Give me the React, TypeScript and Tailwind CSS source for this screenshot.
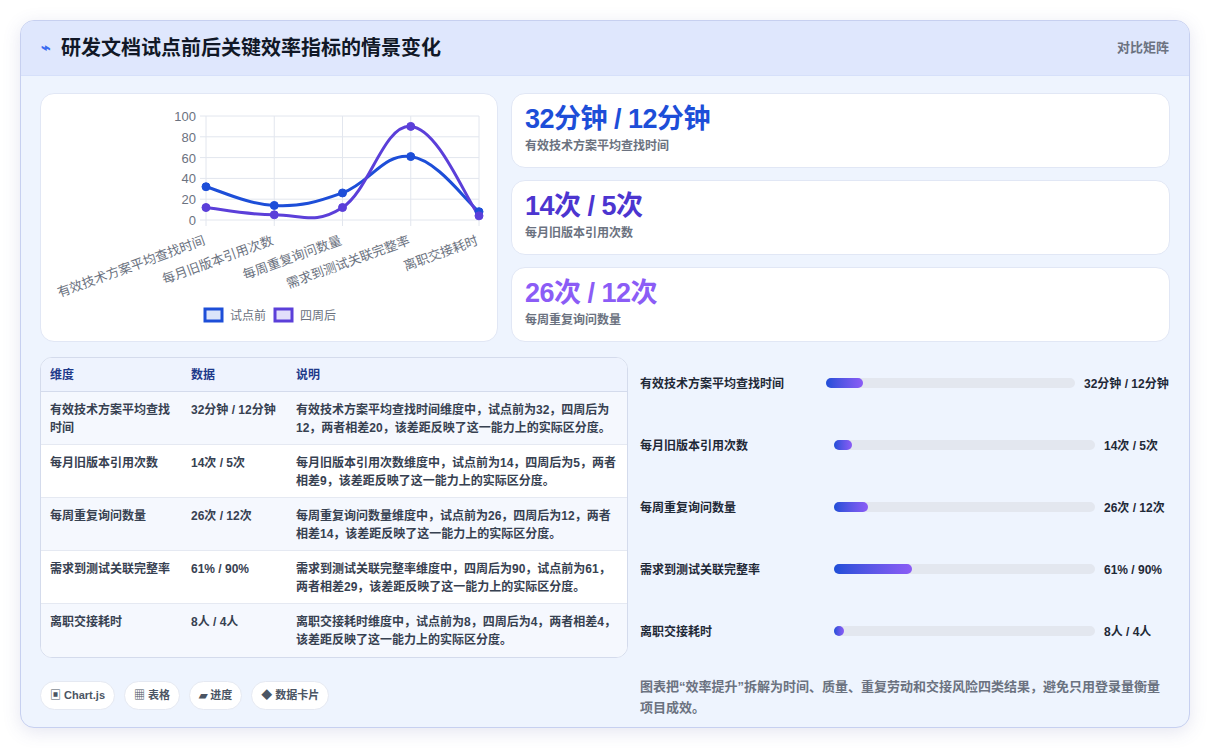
import React from "react";

const F = { fontFamily: '"Liberation Sans","Noto Sans CJK SC",sans-serif' };
const labels = ["有效技术方案平均查找时间", "每月旧版本引用次数", "每周重复询问数量", "需求到测试关联完整率", "离职交接耗时"];
const before = [32, 14, 26, 61, 8];
const after = [12, 5, 12, 90, 4];
const X0 = 164, X1 = 437, Y0 = 124, Y1 = 20;
const xs = labels.map((_, i) => X0 + (i * (X1 - X0)) / 4);
const y = (v: number) => Y0 - ((Y0 - Y1) * v) / 100;

function smooth(vals: number[]) {
  const p = vals.map((v, i) => [xs[i], y(v)]);
  let d = `M${p[0][0]},${p[0][1]}`;
  for (let i = 0; i < p.length - 1; i++) {
    const p0 = p[i - 1] || p[i], p1 = p[i], p2 = p[i + 1], p3 = p[i + 2] || p2;
    const t = 0.2;
    const c1 = [p1[0] + (p2[0] - p0[0]) * t, p1[1] + (p2[1] - p0[1]) * t];
    const c2 = [p2[0] - (p3[0] - p1[0]) * t, p2[1] - (p3[1] - p1[1]) * t];
    d += ` C${c1[0]},${c1[1]} ${c2[0]},${c2[1]} ${p2[0]},${p2[1]}`;
  }
  return d;
}

function Chart() {
  return (
    <svg width="456" height="240" style={F}>
      {[0, 20, 40, 60, 80, 100].map((v) => (
        <g key={v}>
          <line x1={X0 - 6} x2={X1} y1={y(v)} y2={y(v)} stroke="#e2e6ee" />
          <text x={X0 - 10} y={y(v) + 5} fontSize="13" fill="#6b7280" textAnchor="end">{v}</text>
        </g>
      ))}
      {xs.map((x, i) => (
        <line key={i} x1={x} x2={x} y1={Y1} y2={Y0 + 6} stroke="#e2e6ee" />
      ))}
      {labels.map((l, i) => (
        <text key={l} x={xs[i]} y={Y0 + 24} fontSize="13" fill="#6b7280" textAnchor="end" transform={`rotate(-20 ${xs[i]} ${Y0 + 24})`}>{l}</text>
      ))}
      <path d={smooth(before)} fill="none" stroke="#1d4ed8" strokeWidth="3" />
      <path d={smooth(after)} fill="none" stroke="#5b3fd9" strokeWidth="3" />
      {before.map((v, i) => <circle key={"b" + i} cx={xs[i]} cy={y(v)} r="4" fill="#1d4ed8" stroke="#1d4ed8" />)}
      {after.map((v, i) => <circle key={"a" + i} cx={xs[i]} cy={y(v)} r="4" fill="#5b3fd9" stroke="#5b3fd9" />)}
      <rect x="163" y="213" width="17" height="12" fill="#dbe4fa" stroke="#1d4ed8" strokeWidth="3" />
      <text x="188" y="224" fontSize="12" fill="#6b7280">试点前</text>
      <rect x="233" y="213" width="17" height="12" fill="#e2defb" stroke="#5b3fd9" strokeWidth="3" />
      <text x="258" y="224" fontSize="12" fill="#6b7280">四周后</text>
    </svg>
  );
}

const kpis = [
  { v: "32分钟 / 12分钟", l: "有效技术方案平均查找时间", c: "text-[#1d4ed8]" },
  { v: "14次 / 5次", l: "每月旧版本引用次数", c: "text-[#4c35d0]" },
  { v: "26次 / 12次", l: "每周重复询问数量", c: "text-[#8b5cf6]" },
];

const rows = [
  ["有效技术方案平均查找时间", "32分钟 / 12分钟", "有效技术方案平均查找时间维度中，试点前为32，四周后为12，两者相差20，该差距反映了这一能力上的实际区分度。"],
  ["每月旧版本引用次数", "14次 / 5次", "每月旧版本引用次数维度中，试点前为14，四周后为5，两者相差9，该差距反映了这一能力上的实际区分度。"],
  ["每周重复询问数量", "26次 / 12次", "每周重复询问数量维度中，试点前为26，四周后为12，两者相差14，该差距反映了这一能力上的实际区分度。"],
  ["需求到测试关联完整率", "61% / 90%", "需求到测试关联完整率维度中，四周后为90，试点前为61，两者相差29，该差距反映了这一能力上的实际区分度。"],
  ["离职交接耗时", "8人 / 4人", "离职交接耗时维度中，试点前为8，四周后为4，两者相差4，该差距反映了这一能力上的实际区分度。"],
];
const bars = [
  ["有效技术方案平均查找时间", 15, "32分钟 / 12分钟", "grid-cols-[186px_1fr_86px]"],
  ["每月旧版本引用次数", 7, "14次 / 5次", "grid-cols-[194px_1fr_66px]"],
  ["每周重复询问数量", 13, "26次 / 12次", "grid-cols-[194px_1fr_66px]"],
  ["需求到测试关联完整率", 30, "61% / 90%", "grid-cols-[194px_1fr_66px]"],
  ["离职交接耗时", 4, "8人 / 4人", "grid-cols-[194px_1fr_66px]"],
] as const;

export default function App() {
  return (
    <div style={F} className="w-[1210px] h-[748px] bg-white pt-[20px] pl-[20px]">
      <div className="w-[1170px] h-[708px] rounded-[14px] border border-[#c7d0f0] bg-[#eef4fe] overflow-hidden shadow-[0_4px_18px_rgba(80,90,160,0.15)]">
        <div className="h-[55px] bg-[#dfe7fd] flex items-center justify-between px-[20px] border-b border-[#d6e0fa]">
          <div className="flex items-center gap-[10px]">
            <span className="text-[#3b6cf0] text-[16px] font-bold">⌁</span>
            <span className="text-[20px] font-bold text-[#111827]">研发文档试点前后关键效率指标的情景变化</span>
          </div>
          <span className="text-[13px] font-bold text-[#6b7280]">对比矩阵</span>
        </div>
        <div className="px-[19px] pt-[17px]">
          <div className="flex gap-[13px]">
            <div className="w-[458px] h-[249px] bg-white rounded-[14px] border border-[#e1e7f5] pt-[2px] pl-[1px]">
              <Chart />
            </div>
            <div className="flex-1 flex flex-col gap-[12px]">
              {kpis.map((k) => (
                <div key={k.l} className="h-[75px] bg-white rounded-[14px] border border-[#e1e7f5] px-[13px] pt-[8px]">
                  <div className={`text-[27px] font-bold leading-[34px] tracking-[-0.5px] ${k.c}`}>{k.v}</div>
                  <div className="text-[12px] font-bold text-[#6b7280] mt-[1px]">{k.l}</div>
                </div>
              ))}
            </div>
          </div>
          <div className="flex gap-[12px] mt-[15px]">
            <div className="w-[588px]">
              <div className="rounded-[12px] border border-[#d4dbec] overflow-hidden bg-white">
                <div className="grid grid-cols-[141px_105px_1fr] h-[34px] items-center bg-[#eef3fe] border-b border-[#d4dbec] px-[9px] text-[12px] font-bold text-[#1e3a8a]">
                  <span>维度</span><span>数据</span><span>说明</span>
                </div>
                {rows.map((r, i) => (
                  <div key={i} className={`grid grid-cols-[141px_105px_1fr] px-[9px] pt-[9px] h-[53px] text-[12px] leading-[18px] text-[#374151] font-bold ${i % 2 === 0 ? "bg-[#f5f8fe]" : "bg-white"} ${i < 4 ? "border-b border-[#e5e9f2]" : ""}`}>
                    <span className="pr-[16px]">{r[0]}</span>
                    <span className="whitespace-nowrap">{r[1]}</span>
                    <span>{r[2]}</span>
                  </div>
                ))}
              </div>
              <div className="flex gap-[9px] mt-[23px]">
                {["▣ Chart.js", "▦ 表格", "▰ 进度", "◆ 数据卡片"].map((t) => (
                  <span key={t} className="h-[29px] px-[9px] rounded-full bg-white border border-[#e5e9f2] text-[11px] font-bold text-[#4b5563] flex items-center">{t}</span>
                ))}
              </div>
            </div>
            <div className="flex-1">
              <div className="flex flex-col pt-[14px]">
                {bars.map(([l, p, v, g]) => (
                  <div key={l} className={`grid ${g} h-[62px]`}>
                    <span className="text-[12px] font-bold text-[#1f2937] pt-[4px] whitespace-nowrap">{l}</span>
                    <div className="h-[10px] rounded-full bg-[#e3e7ef] mt-[7px] mr-[9px]">
                      <div className="h-full rounded-full bg-gradient-to-r from-[#1d4ed8] to-[#8b5cf6]" style={{ width: `${p}%` }} />
                    </div>
                    <span className="text-[12px] font-bold text-[#1f2937] pt-[4px] whitespace-nowrap">{v}</span>
                  </div>
                ))}
              </div>
              <p className="text-[13px] font-bold leading-[21px] text-[#6b7280] mt-[-5px]">图表把“效率提升”拆解为时间、质量、重复劳动和交接风险四类结果，避免只用登录量衡量项目成效。</p>
            </div>
          </div>
        </div>
      </div>
    </div>
  );
}
